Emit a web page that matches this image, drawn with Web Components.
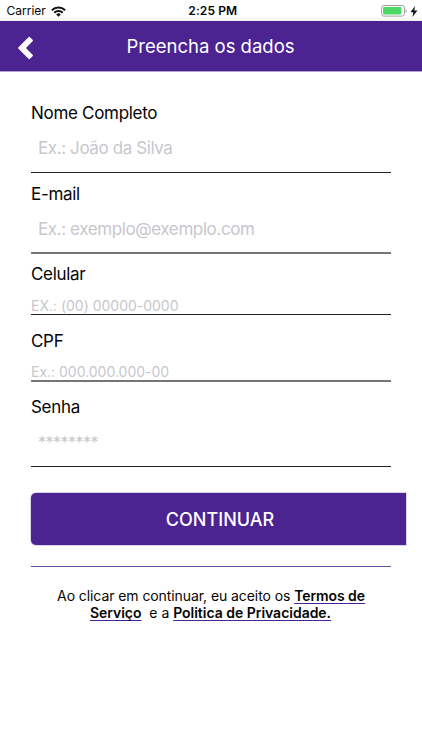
<!DOCTYPE html>
<html lang="pt-BR">
<head>
<meta charset="utf-8">
<title>Preencha os dados</title>
<style>
body{
    margin:0;
    background:#fff;
    color:#050505;
    font-family:Inter, "Liberation Sans", sans-serif;
    --brand:#4b2492;
}
</style>
</head>
<body>
<signup-screen></signup-screen>
<script>
class StatusBar extends HTMLElement{
    constructor(){
        super();
        this.attachShadow({mode: 'open'});
        this.shadowRoot.innerHTML = `
        <style>
        :host{
            display:grid;
            grid-template-columns:1fr auto 1fr;
            align-items:center;
            height:21px;
            box-sizing:border-box;
            padding:1px 4px 0 6.5px;
            background:linear-gradient(#fff 75%, #f1f0f3);
            font-size:12px;
            line-height:20px;
        }
        .left, .right{
            display:flex;
            align-items:center;
        }
        .left{
            gap:5.5px;
        }
        .right{
            justify-content:flex-end;
            gap:3px;
        }
        .time{
            padding-left:1px;
            font-weight:600;
            letter-spacing:.1px;
        }
        svg{
            display:block;
        }
        </style>
        <div class="left">
            <span>Carrier</span>
            <svg width="15" height="11" viewBox="0 0 15 11" fill="none" stroke="#111" stroke-width="2">
                <path d="M.9 4.3a9.3 9.3 0 0 1 13.2 0"/>
                <path d="M3.3 6.7a5.9 5.9 0 0 1 8.4 0"/>
                <path d="M7.5 10.7L5.2 8.4a3.3 3.3 0 0 1 4.6 0z" fill="#111" stroke="none"/>
            </svg>
        </div>
        <span class="time">2:25 PM</span>
        <div class="right">
            <svg width="26" height="12" viewBox="0 0 26 12">
                <rect x=".5" y=".5" width="23" height="10.6" rx="2.4" fill="#fff" stroke="#a5a5a5"/>
                <rect x="2" y="2" width="18.4" height="7.6" rx="1" fill="#4cd964"/>
                <path d="M24.6 4v4q1.2-.6 1.2-2t-1.2-2z" fill="#a5a5a5"/>
            </svg>
            <svg width="8" height="11" viewBox="0 0 7 10">
                <path d="M4.4 0L.3 5.6h2.6L2.1 10 6.6 4.1H3.8z" fill="#111"/>
            </svg>
        </div>
        `
    }
}
customElements.define("status-bar", StatusBar)

class NavHeader extends HTMLElement{
    constructor(){
        super();
        this.attachShadow({mode: 'open'});
        this.shadowRoot.innerHTML = `
        <style>
        :host{
            display:grid;
            grid-template-columns:1fr auto 1fr;
            align-items:center;
            height:50px;
            border-bottom:1px solid #b3a2d3;
            background:var(--brand);
            color:#fff;
        }
        svg{
            display:block;
            margin:4px 0 0 17px;
        }
        h1{
            margin:0 1px 0 0;
            font-size:18.5px;
            font-weight:400;
            line-height:24px;
        }
        </style>
        <svg width="17" height="24" viewBox="0 0 17 24" fill="#fff" stroke="#fff" stroke-width="1.4" stroke-linejoin="round">
            <path d="M12.2 1.4L1.8 12l10.4 10.6 3.1-3.1L8 12l7.3-7.5z"/>
        </svg>
        <h1><slot></slot></h1>
        `
    }
}
customElements.define("nav-header", NavHeader)

class FormField extends HTMLElement{
    constructor(){
        super();
        this.attachShadow({mode: 'open'});
        this.shadowRoot.innerHTML = `
        <style>
        :host{
            display:flex;
            flex-direction:column;
            height:80.7px;
        }
        :host([size="small"]){
            height:66.5px;
        }
        label{
            font-size:17px;
            line-height:20px;
            letter-spacing:-.3px;
        }
        .value{
            display:flex;
            align-items:center;
            height:46.5px;
            padding:2px 0 0 7px;
            border-bottom:1px solid #222;
            color:#c7c7cd;
            font-size:17px;
            line-height:20px;
            letter-spacing:-.4px;
        }
        :host([size="small"]) .value{
            align-items:flex-end;
            height:28.5px;
            padding:1px 0 0;
            font-size:14px;
            line-height:17px;
            letter-spacing:-.01px;
        }
        :host([line="soft"]) .value{
            border-bottom:2px solid #757577;
        }
        :host([type="password"]) .value{
            height:48.5px;
            padding-top:0;
            font-size:16px;
            letter-spacing:-.5px;
        }
        </style>
        <label></label>
        <div class="value"><slot></slot></div>
        `
    }
    connectedCallback(){
        this.shadowRoot.querySelector("label").textContent = this.getAttribute("label");
    }
}
customElements.define("form-field", FormField)

class SubmitButton extends HTMLElement{
    constructor(){
        super();
        this.attachShadow({mode: 'open'});
        this.shadowRoot.innerHTML = `
        <style>
        :host{
            display:block;
        }
        button{
            display:block;
            width:100%;
            height:52px;
            padding:1px 0 0 3px;
            border:none;
            border-radius:5px 0 0 5px;
            background:var(--brand);
            box-shadow:0 0 0 .5px #b9a6dc;
            color:#fff;
            font-family:inherit;
            font-size:18px;
            font-weight:500;
        }
        </style>
        <button><slot></slot></button>
        `
    }
}
customElements.define("submit-button", SubmitButton)

class TermsNote extends HTMLElement{
    constructor(){
        super();
        this.attachShadow({mode: 'open'});
        this.shadowRoot.innerHTML = `
        <style>
        :host{
            display:block;
            border-top:1px solid #6650a0;
            padding-top:20px;
            font-size:14px;
            line-height:17.5px;
            letter-spacing:-.08px;
            text-align:center;
        }
        p{
            margin:0;
            white-space:pre;
        }
        a{
            color:#050505;
            font-weight:600;
            text-decoration:underline;
            text-decoration-color:var(--brand);
            text-decoration-thickness:1px;
            text-underline-offset:2px;
            text-decoration-skip-ink:none;
        }
        p + p{
            padding-right:1px;
            letter-spacing:-.02px;
        }
        </style>
        <p>Ao clicar em continuar, eu aceito os <a>Termos de</a></p>
        <p><a>Serviço</a>  e a <a>Politica de Privacidade.</a></p>
        `
    }
}
customElements.define("terms-note", TermsNote)

class SignupScreen extends HTMLElement{
    constructor(){
        super();
        this.attachShadow({mode: 'open'});
        this.shadowRoot.innerHTML = `
        <style>
        :host{
            display:block;
            height:750px;
            overflow:hidden;
        }
        main{
            padding:31px 31px 0;
        }
        submit-button{
            margin:14.5px -15px 21.3px 0;
        }
        </style>
        <status-bar></status-bar>
        <nav-header>Preencha os dados</nav-header>
        <main>
            <form-field label="Nome Completo">Ex.: João da Silva</form-field>
            <form-field label="E-mail" line="soft">Ex.: exemplo@exemplo.com</form-field>
            <form-field label="Celular" size="small">EX.: (00) 00000-0000</form-field>
            <form-field label="CPF" size="small" line="soft">Ex.: 000.000.000-00</form-field>
            <form-field label="Senha" type="password">********</form-field>
            <submit-button>CONTINUAR</submit-button>
            <terms-note></terms-note>
        </main>
        `
    }
}
customElements.define("signup-screen", SignupScreen)
</script>
</body>
</html>
